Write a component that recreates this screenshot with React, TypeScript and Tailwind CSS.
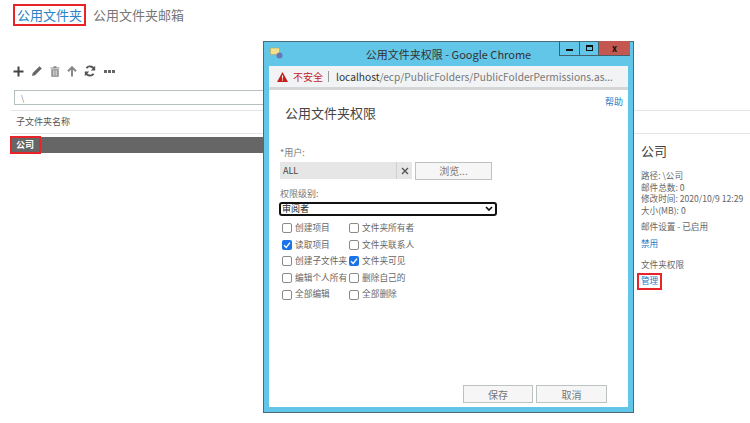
import React from "react";

const CJK = "font-['Noto_Sans_CJK_SC','Noto_Sans',sans-serif]";

function Tick({ label, checked }: { label: string; checked?: boolean }) {
  return (
    <div className="flex items-center h-[16.6px] gap-[3px]">
      {checked ? (
        <span className="w-[10px] h-[10px] shrink-0 rounded-[2px] bg-[#1a73e8] flex items-center justify-center">
          <svg width="8" height="8" viewBox="0 0 8 8">
            <path d="M1 4.2 L3.2 6.4 L7 1.6" fill="none" stroke="#fff" strokeWidth="1.4" />
          </svg>
        </span>
      ) : (
        <span className="w-[10px] h-[10px] shrink-0 rounded-[2px] border border-[#8a8a8a] bg-white" />
      )}
      <span className="text-[8.7px] leading-none text-[#666] whitespace-nowrap">{label}</span>
    </div>
  );
}

function Toolbar() {
  return (
    <div className="flex items-center gap-[7px] h-[14px] pl-[13px] text-[#555]">
      <svg width="11" height="11" viewBox="0 0 11 11">
        <path d="M5.5 0.5V10.5M0.5 5.5H10.5" stroke="#444" strokeWidth="2" />
      </svg>
      <svg width="12" height="12" viewBox="0 0 12 12">
        <path d="M1 11l.7-3L8.5 1.2l2.3 2.3L4 10.3z" fill="#666" />
      </svg>
      <svg width="10" height="11" viewBox="0 0 10 11">
        <path d="M0.5 1.5H9.5V2.5H0.5ZM3.5 0.3H6.5V1.5H3.5ZM1.3 3.2H8.7V10.7H1.3Z" fill="#888" />
        <path d="M3.3 4.2V9.7M5 4.2V9.7M6.7 4.2V9.7" stroke="#fff" strokeWidth="0.7" />
      </svg>
      <svg width="10" height="11" viewBox="0 0 10 11">
        <path d="M5 10.5V2M1 5.2L5 1.2L9 5.2" fill="none" stroke="#888" strokeWidth="2" />
      </svg>
      <svg width="12" height="12" viewBox="0 0 12 12">
        <path d="M10.2 4.6A4.4 4.4 0 0 0 2.4 3.2M1.8 7.4A4.4 4.4 0 0 0 9.6 8.8" fill="none" stroke="#555" strokeWidth="1.9" />
        <path d="M11.2 0.8V5.4H6.8ZM0.8 11.2V6.6H5.2Z" fill="#555" />
      </svg>
      <svg width="11" height="3" viewBox="0 0 11 3" className="ml-[1px]">
        <path d="M0 0H3V3H0ZM4 0H7V3H4ZM8 0H11V3H8Z" fill="#666" />
      </svg>
    </div>
  );
}

function PermissionsWindow() {
  const left = [
    { label: "创建项目" },
    { label: "读取项目", checked: true },
    { label: "创建子文件夹" },
    { label: "编辑个人所有" },
    { label: "全部编辑" },
  ];
  const right = [
    { label: "文件夹所有者" },
    { label: "文件夹联系人" },
    { label: "文件夹可见", checked: true },
    { label: "删除自己的" },
    { label: "全部删除" },
  ];

  return (
    <div className="absolute left-[263px] top-[41px] w-[371px] h-[372px] bg-[#62c6e8] border border-[#4a6a75] flex flex-col px-[5px] pb-[5px]">
      {/* Title bar */}
      <div className="h-[24px] shrink-0 relative flex items-center justify-center">
        <svg width="13" height="12" viewBox="0 0 13 12" className="absolute left-[1px] top-[5px]">
          <rect x="0.5" y="1" width="9" height="6.5" fill="#f3e08c" stroke="#b9a35a" strokeWidth="0.6" />
          <circle cx="9.5" cy="8.5" r="3" fill="#6a78b8" />
        </svg>
        <span className="text-[11px] text-[#333]">公用文件夹权限 - Google Chrome</span>
        <div className="absolute right-[-2px] top-[-1px] flex h-[15px] border-b border-[#44606c]">
          <div className="w-[20px] border-l border-[#44606c] flex items-center justify-center">
            <div className="w-[7px] h-[2px] bg-[#111] mt-[3px]" />
          </div>
          <div className="w-[19px] border-l border-[#44606c] flex items-center justify-center">
            <div className="w-[7px] h-[6px] border border-t-2 border-[#111]" />
          </div>
          <div className="w-[32px] bg-[#c4574f] border-l border-[#44606c] flex items-center justify-center text-[9px] font-bold leading-none text-[#111]">
            x
          </div>
        </div>
      </div>
      {/* Address bar */}
      <div className="h-[21px] shrink-0 bg-[#f1f3f4] flex items-center pl-[8px] text-[10.2px] whitespace-nowrap">
        <svg width="11" height="10" viewBox="0 0 11 10">
          <path d="M5.5 0L11 10H0Z" fill="#c5221f" />
          <path d="M5.5 3.4V6.6M5.5 7.4V8.6" stroke="#fff" strokeWidth="1" />
        </svg>
        <span className="ml-[5px] text-[10px] text-[#c5221f]">不安全</span>
        <span className="w-px h-[11px] bg-[#999] ml-[5px] mr-[7px]" />
        <span className="text-[#333]">localhost</span>
        <span className="text-[#777]">/ecp/PublicFolders/PublicFolderPermissions.as...</span>
      </div>
      {/* Page */}
      <div className="flex-1 bg-white border-t-[3px] border-[#d4d6d8] flex flex-col pl-[11px] pr-[5px] relative">
        <a className="absolute right-[5px] top-[5px] text-[9px] text-[#1f7ac6]">帮助</a>
        <h1 className="mt-[14px] ml-[5px] text-[13px] leading-[18px] font-normal text-[#444]">公用文件夹权限</h1>
        <div className="mt-[25px] text-[9px] leading-[12px] text-[#777]">*用户:</div>
        <div className="mt-[3px] flex items-center h-[17px]">
          <div className="w-[116px] h-[17px] bg-[#e6e6e6] flex items-center pl-[3px] text-[9px] text-[#444]">ALL</div>
          <div className="w-[16px] h-[17px] bg-[#e6e6e6] border-l border-[#d0d0d0] flex items-center justify-center">
            <svg width="8" height="8" viewBox="0 0 8 8">
              <path d="M1 1L7 7M7 1L1 7" stroke="#555" strokeWidth="1.4" />
            </svg>
          </div>
          <div className="ml-[3px] w-[77px] h-[18px] bg-[#f6f6f6] border border-[#bcc2c2] flex items-center justify-center text-[10px] text-[#777]">浏览...</div>
        </div>
        <div className="mt-[9px] text-[9px] leading-[12px] text-[#777]">权限级别:</div>
        <div className="mt-[2px] -ml-[1px] w-[218px] h-[14px] border-2 border-[#111] rounded-[3px] flex items-center justify-between pl-[1px] pr-[2px] text-[9px] text-[#222]">
          <span>审阅者</span>
          <svg width="8" height="6" viewBox="0 0 8 6">
            <path d="M1 1L4 4L7 1" fill="none" stroke="#111" strokeWidth="1.7" />
          </svg>
        </div>
        <div className="mt-[4px] ml-[2px] flex">
          <div className="w-[67px] flex flex-col">
            {left.map((t) => (
              <Tick key={t.label} label={t.label} checked={t.checked} />
            ))}
          </div>
          <div className="flex flex-col">
            {right.map((t) => (
              <Tick key={t.label} label={t.label} checked={t.checked} />
            ))}
          </div>
        </div>
        <div className="mt-auto mb-[4px] ml-[183px] flex gap-[3px]">
          <div className="w-[70px] h-[18px] bg-[#f6f6f6] border border-[#bcc2c2] flex items-center justify-center text-[10px] text-[#777]">保存</div>
          <div className="w-[71px] h-[18px] bg-[#f6f6f6] border border-[#bcc2c2] flex items-center justify-center text-[10px] text-[#777]">取消</div>
        </div>
      </div>
    </div>
  );
}

export default function App() {
  return (
    <div className={`relative w-[750px] h-[423px] bg-white overflow-hidden ${CJK}`}>
      {/* Tabs */}
      <div className="flex items-center pt-[4px] pl-[13px]">
        <div className="h-[22px] w-[73px] border-2 border-[#e8232a] flex items-center justify-center text-[13px] text-[#2a83c9] whitespace-nowrap">公用文件夹</div>
        <div className="ml-[7px] text-[13px] text-[#777] whitespace-nowrap">公用文件夹邮箱</div>
      </div>
      <div className="mt-[38px]">
        <Toolbar />
      </div>
      <div className="flex mt-[12px]">
        {/* List */}
        <div className="w-[630px] shrink-0">
          <div className="ml-[14px] mr-[30px] h-[15px] border border-[#b5bfc0] pl-[6px] text-[8px] leading-[13px] text-[#777]">\</div>
          <div className="mt-[5px] ml-[11px] h-[24px] border-y border-[#e3e6e6] flex items-center pl-[5px] text-[9px] text-[#555]">子文件夹名称</div>
          <div className="mt-[3px] ml-[11px] h-[16px] bg-[#666] relative">
            <div className="absolute -left-px top-[-1px] w-[31px] h-[18px] border-2 border-[#e8232a] flex items-center pl-[4px] text-[9px] font-bold text-white">公司</div>
          </div>
        </div>
        {/* Details */}
        <div className="flex-1 flex flex-col">
          <div className="h-[20px]" />
          <div className="h-[24px] border-y border-[#e3e6e6]" />
          <div className="flex-1 border-l border-[#d8d8d8] h-[290px] pl-[10px] text-[8.6px] leading-[11.5px] text-[#666]">
            <div className="mt-[8px] text-[13px] leading-[18px] text-[#444]">公司</div>
            <div className="mt-[10px]">路径: \公司</div>
            <div>邮件总数: 0</div>
            <div className="whitespace-nowrap">修改时间: 2020/10/9 12:29</div>
            <div>大小(MB): 0</div>
            <div className="mt-[5px]">邮件设置 - 已启用</div>
            <div className="mt-[5px] text-[#1f7ac6]">禁用</div>
            <div className="mt-[10px]">文件夹权限</div>
            <div className="mt-[2px] -ml-[4px] w-[25px] h-[17px] border-2 border-[#e8232a] flex items-center pl-[2px] text-[#1f7ac6] whitespace-nowrap">管理</div>
          </div>
        </div>
      </div>
      <PermissionsWindow />
    </div>
  );
}
